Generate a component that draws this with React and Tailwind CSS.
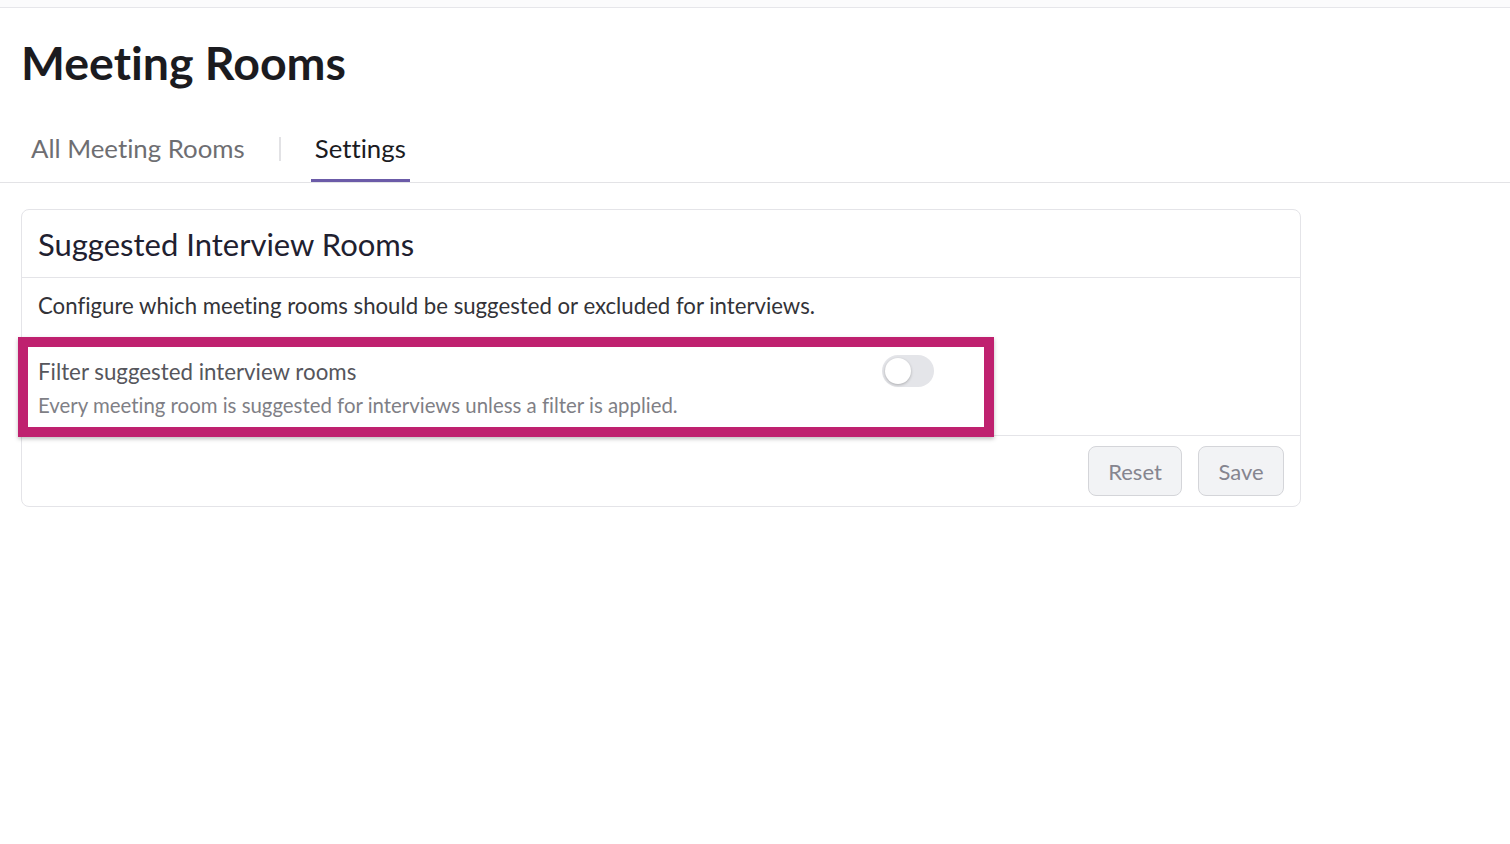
import { useState } from 'react'

const font = { fontFamily: 'Lato, "Open Sans", sans-serif' }

function Toggle({ on, onChange }) {
  return (
    <button
      type="button"
      onClick={() => onChange(!on)}
      className={`relative h-[32px] w-[52px] rounded-full border-none p-0 cursor-pointer transition-colors ${
        on ? 'bg-[#6b5ba8]' : 'bg-[#e4e5e9]'
      }`}
    >
      <span
        className={`absolute top-[3px] h-[26px] w-[26px] rounded-full bg-white shadow-[0_1px_3px_rgba(0,0,0,0.25)] transition-all ${
          on ? 'left-[23px]' : 'left-[3px]'
        }`}
      />
    </button>
  )
}

function Tab({ active, onClick, children }) {
  return (
    <button
      type="button"
      onClick={onClick}
      className={`border-0 border-b-[3px] border-solid bg-transparent px-[4px] pb-[14px] text-[25.8px] leading-[34px] cursor-pointer ${
        active ? 'text-[#1b1b1f] border-[#6b5ba8]' : 'text-[#6e6e72] border-transparent'
      }`}
    >
      {children}
    </button>
  )
}

export default function App() {
  const [tab, setTab] = useState('settings')
  const [filterOn, setFilterOn] = useState(false)

  return (
    <div className="min-h-screen bg-white [font-variant-ligatures:none]" style={font}>
      <div className="h-[8px] border-b border-[#e6e6ea] bg-[#fbfbfc]" />

      <h1 className="m-0 pl-[21px] pt-[26px] text-[46.5px] font-bold leading-[56px] text-[#1b1b1f]">
        Meeting Rooms
      </h1>

      {/* Tabs */}
      <div className="mt-[41px] flex items-end border-b border-[#e3e3e6] pl-[27px]">
        <Tab active={tab === 'all'} onClick={() => setTab('all')}>
          All Meeting Rooms
        </Tab>
        <span className="mx-[30px] mb-[21px] h-[24px] w-[2px] bg-[#e2e2e5]" />
        <Tab active={tab === 'settings'} onClick={() => setTab('settings')}>
          Settings
        </Tab>
      </div>

      {/* Settings card */}
      <div className="ml-[21px] mt-[26px] w-[1280px] rounded-[8px] border border-[#e4e4e8] bg-white">
        <div className="border-b border-[#e4e4e8] px-[16px] pt-[16px] pb-[15px]">
          <h2 className="m-0 text-[31px] font-normal leading-[36px] text-[#1f2130]">
            Suggested Interview Rooms
          </h2>
        </div>

        <div className="px-[16px] pt-[14px] pb-[16px]">
          <p className="m-0 text-[22.2px] leading-[28px] text-[#333338]">
            Configure which meeting rooms should be suggested or excluded for interviews.
          </p>

          <div className="relative mt-[37px] flex w-[896px] items-start justify-between">
            <div>
              <div className="text-[22.3px] leading-[30px] text-[#56565c]">
                Filter suggested interview rooms
              </div>
              <div className="mt-[4px] text-[20.4px] leading-[28px] text-[#7f7f86]">
                Every meeting room is suggested for interviews unless a filter is applied.
              </div>
            </div>
            <div className="-mt-[2px]">
              <Toggle on={filterOn} onChange={setFilterOn} />
            </div>
            {/* annotation frame around the setting row */}
            <div className="pointer-events-none absolute -left-[20px] -right-[60px] -top-[20px] -bottom-[18px] border-[10px] border-[#bf216f] shadow-[0_2px_4px_rgba(0,0,0,0.25)]" />
          </div>
        </div>

        <div className="flex justify-end gap-[16px] border-t border-[#e4e4e8] px-[16px] py-[10px]">
          <button
            type="button"
            className="h-[50px] w-[94px] rounded-[8px] border border-[#d4d5d9] bg-[#f2f3f5] text-[22px] text-[#85858f] cursor-pointer"
          >
            Reset
          </button>
          <button
            type="button"
            className="h-[50px] w-[86px] rounded-[8px] border border-[#d4d5d9] bg-[#f2f3f5] text-[22px] text-[#85858f] cursor-pointer"
          >
            Save
          </button>
        </div>
      </div>
    </div>
  )
}
